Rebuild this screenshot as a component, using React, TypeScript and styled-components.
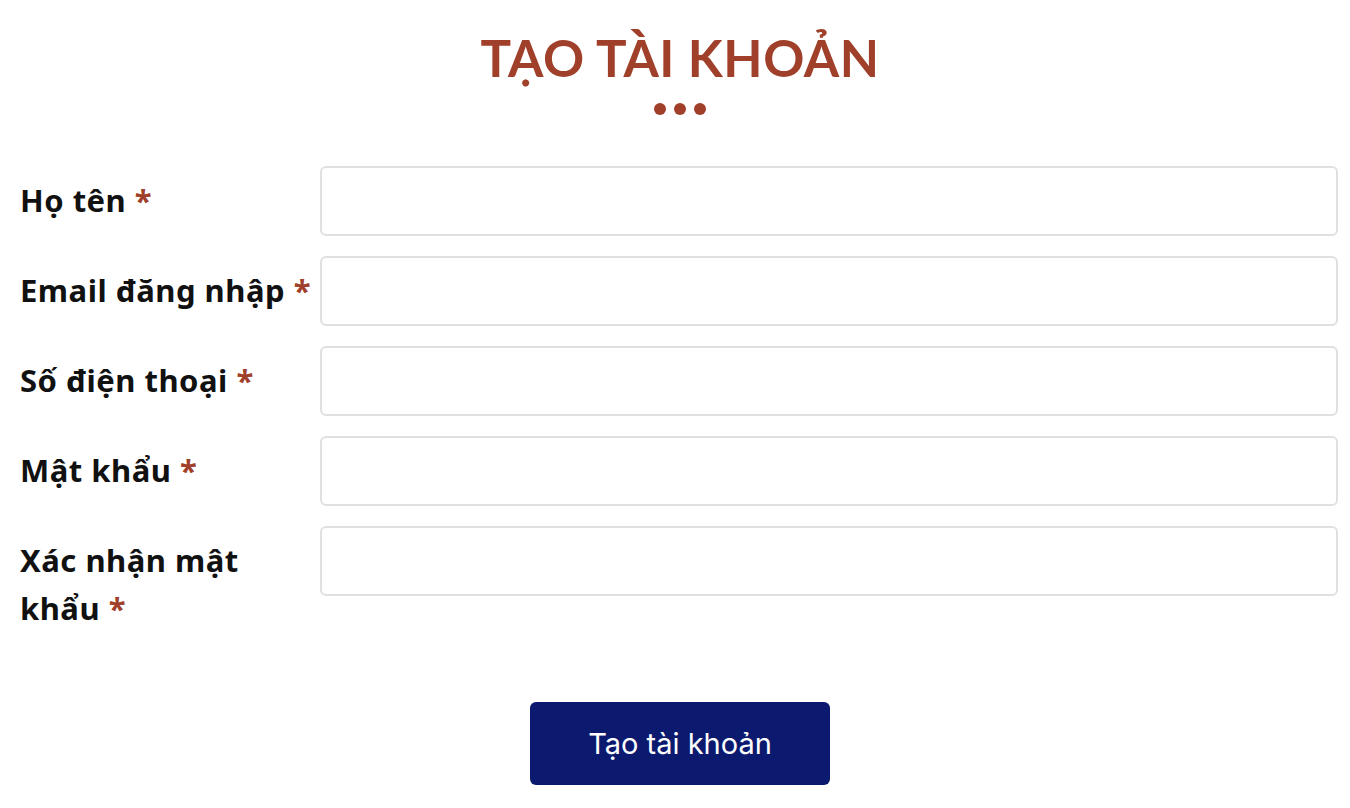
import React from "react";
import styled, { createGlobalStyle } from "styled-components";

const Global = createGlobalStyle`
  html, body { margin: 0; padding: 0; background: #fff; }
  body { font-family: "Noto Sans", "Lato", sans-serif; color: #111; }
  * { box-sizing: border-box; }
`;

const Page = styled.div`
  padding: 28px 12px 20px 20px;
  display: flex;
  flex-direction: column;
`;

const Header = styled.div`
  display: flex;
  flex-direction: column;
  align-items: center;
  padding-left: 2px;
`;

const Title = styled.h1`
  margin: 0;
  font-family: "Lato", "Noto Sans", sans-serif;
  font-weight: 700;
  font-size: 51px;
  line-height: 60px;
  letter-spacing: 0.5px;
  color: #a0402a;
`;

const Dots = styled.div`
  display: flex;
  gap: 8px;
  margin-top: 15px;
`;

const Dot = styled.span`
  width: 12px;
  height: 12px;
  border-radius: 50%;
  background: #a0402a;
`;

const Form = styled.form`
  margin-top: 51px;
  display: flex;
  flex-direction: column;
  gap: 20px;
`;

const Row = styled.div`
  display: grid;
  grid-template-columns: 300px 1fr;
  align-items: start;
`;

const Label = styled.label`
  padding-top: 10px;
  font-family: "Noto Sans", sans-serif;
  font-size: 31px;
  line-height: 48px;
  font-weight: 700;
  letter-spacing: 0.5px;
  color: #111;
`;

const Req = styled.span`
  color: #a0402a;
`;

const Input = styled.input`
  height: 70px;
  width: 100%;
  border: 2px solid #e0e0e0;
  border-radius: 6px;
  background: #fff;
  font-size: 20px;
  padding: 0 16px;
  outline: none;
`;

const Actions = styled.div`
  display: flex;
  justify-content: center;
  margin-top: 70px;
  padding-left: 2px;
`;

const Button = styled.button`
  width: 300px;
  height: 83px;
  border: none;
  border-radius: 6px;
  background: #0b1a6e;
  color: #fff;
  font-family: "Inter", "Roboto", sans-serif;
  font-size: 29px;
  font-weight: 400;
  letter-spacing: 0px;
  cursor: pointer;
`;

const fields = [
  { label: "Họ tên", type: "text" },
  { label: "Email đăng nhập", type: "email" },
  { label: "Số điện thoại", type: "tel" },
  { label: "Mật khẩu", type: "password" },
  { label: "Xác nhận mật khẩu", type: "password" },
];

export default function App() {
  return (
    <>
      <Global />
      <Page>
        <Header>
          <Title>TẠO TÀI KHOẢN</Title>
          <Dots>
            <Dot />
            <Dot />
            <Dot />
          </Dots>
        </Header>
        <Form onSubmit={(e) => e.preventDefault()}>
          {fields.map((f) => (
            <Row key={f.label}>
              <Label>
                {f.label} <Req>*</Req>
              </Label>
              <Input type={f.type} />
            </Row>
          ))}
        </Form>
        <Actions>
          <Button type="submit">Tạo tài khoản</Button>
        </Actions>
      </Page>
    </>
  );
}
